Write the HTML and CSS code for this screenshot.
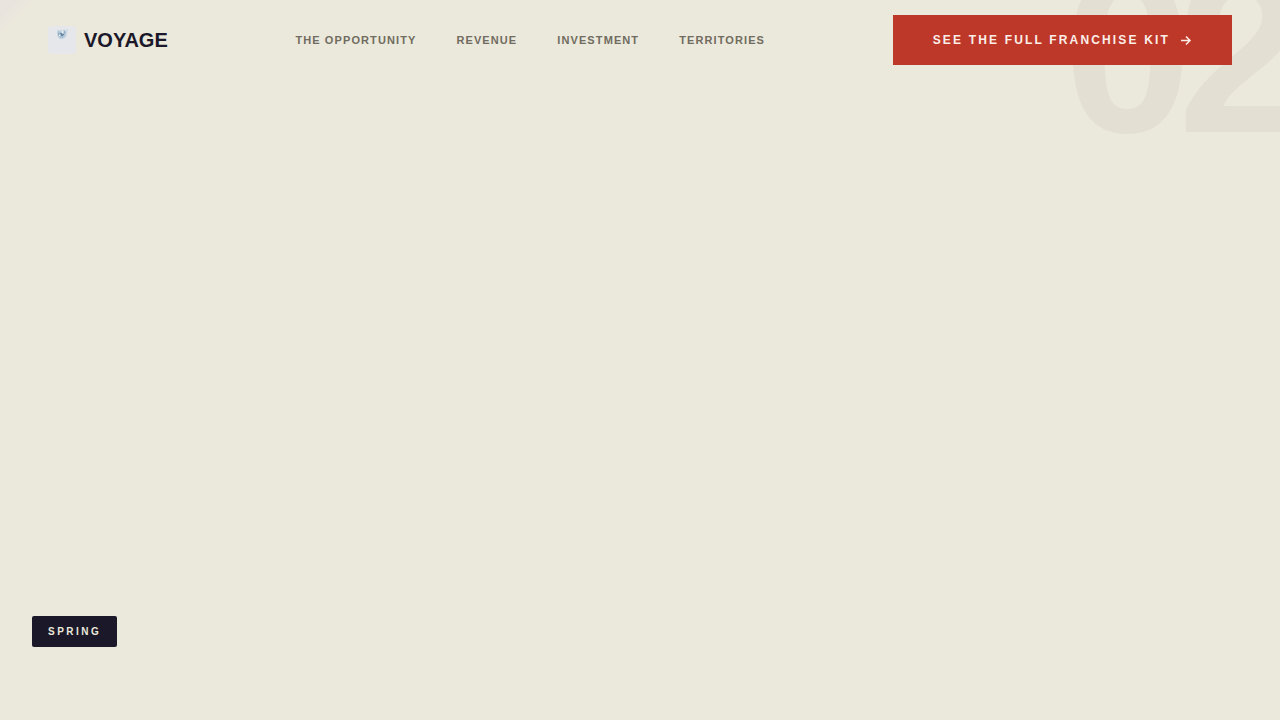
FILE: index.html
```html
<!DOCTYPE html>
<html lang="en">
<head>
<meta charset="utf-8">
<meta name="viewport" content="width=device-width, initial-scale=1">
<title>Voyage</title>
<link rel="stylesheet" href="styles.css">
</head>
<body>
<div class="page">
  <span class="chapter-number" aria-hidden="true">02</span>
  <header class="site-header">
    <a class="brand" href="#">
      <svg class="brand-mark" viewBox="0 0 28 28" aria-hidden="true">
        <rect width="28" height="28" rx="4" fill="#e5e7eb"/>
        <path d="M9 5q2-2 4-1 1 1 3-1l2 1 2-1-1 5q0 4-4 5-5 1-6-4z" fill="#cbd8e4"/>
        <path d="M10 5l3 1 2 2 1-3 2 1-1 4q-2 3-5 2-3-2-2-7z" fill="#abc0d2"/>
        <path d="M12 7h2v1h2v1h-1v1h-2V8h-1z" fill="#6384a3"/>
        <path d="M16 5h1v2h-1zM10 7h1v2h-1z" fill="#8da9c1"/>
        <path d="M14 5h1v2h-1zM11 9h1v1h-1z" fill="#edf3f5"/>
      </svg>
      <span>VOYAGE</span>
    </a>
    <nav class="site-nav" aria-label="Main">
      <a href="#opportunity">THE OPPORTUNITY</a>
      <a href="#revenue">REVENUE</a>
      <a href="#investment">INVESTMENT</a>
      <a href="#territories">TERRITORIES</a>
    </nav>
    <a class="cta" href="#kit">
      <span>SEE THE FULL FRANCHISE KIT</span>
      <svg class="cta-arrow" viewBox="0 0 12 12" aria-hidden="true">
        <path d="M1 6.5h9M6 2.5l4 4-4 4" fill="none" stroke="currentColor" stroke-width="1.5"/>
      </svg>
    </a>
  </header>
  <main class="stage">
    <span class="season">SPRING</span>
  </main>
</div>
</body>
</html>
```
FILE: styles.css
```css
* {
  box-sizing: border-box;
}

body {
  margin: 0;
  font-family: "Liberation Sans", Arial, sans-serif;
  font-weight: 700;
  color: #1a1829;
  background: #ebe8dc;
}

a {
  color: inherit;
  text-decoration: none;
}

.page {
  position: relative;
  display: flex;
  flex-direction: column;
  min-height: 100vh;
  overflow: hidden;
  background: linear-gradient(135deg, #eae4de 12px, transparent 24px);
}

.chapter-number {
  position: absolute;
  top: -62px;
  right: -12px;
  font-size: 230px;
  line-height: 1;
  letter-spacing: -0.06em;
  color: #e3dfd3;
}

.site-header {
  position: relative;
  display: flex;
  align-items: center;
  justify-content: space-between;
  min-height: 80px;
  padding: 0 48px;
}

.brand {
  display: flex;
  align-items: center;
  gap: 8px;
  font-size: 20px;
}

.brand-mark {
  width: 28px;
  height: 28px;
}

.site-nav {
  display: flex;
  gap: 40px;
  font-size: 11px;
  letter-spacing: 0.1em;
  color: #706c5f;
}

.cta {
  display: flex;
  align-items: center;
  gap: 10px;
  padding: 18px 40px;
  font-size: 12px;
  line-height: 14px;
  letter-spacing: 0.18em;
  color: #fbeee8;
  background: #be382a;
}

.cta-arrow {
  width: 12px;
  height: 12px;
}

.stage {
  display: flex;
  flex: 1;
  align-items: flex-end;
  padding: 0 32px 73px;
}

.season {
  padding: 10px 16px;
  border-radius: 2px;
  font-size: 10px;
  line-height: 11px;
  letter-spacing: 0.25em;
  color: #ebe8dc;
  background: #1a1829;
}
```
